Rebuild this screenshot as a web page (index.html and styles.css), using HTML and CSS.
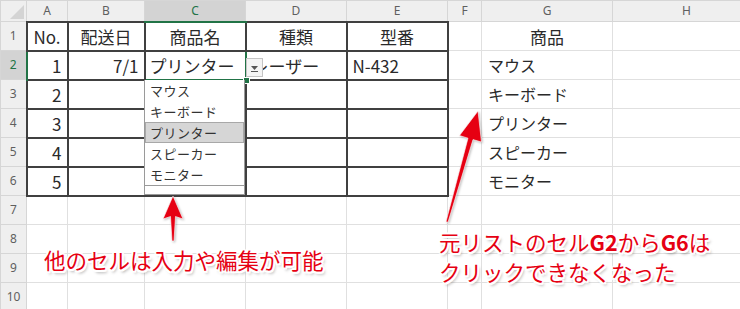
FILE: index.html
```html
<!DOCTYPE html>
<html lang="ja">
<head>
<meta charset="utf-8">
<link rel="stylesheet" href="styles.css">
</head>
<body>
<div class="sheet">
  <table class="grid">
    <colgroup>
      <col class="c-rh"><col class="c-a"><col class="c-b"><col class="c-c"><col class="c-d"><col class="c-e"><col class="c-f"><col class="c-g"><col class="c-h">
    </colgroup>
    <tr class="hdr">
      <th class="corner"><span class="tri"></span></th>
      <th>A</th><th>B</th><th class="sel-col">C</th><th>D</th><th>E</th><th>F</th><th>G</th><th>H</th>
    </tr>
    <tr>
      <th class="rh">1</th>
      <td class="tb tl tc">No.</td><td class="tb tc">配送日</td><td class="tb tc">商品名</td><td class="tb tc">種類</td><td class="tb tr tc">型番</td>
      <td></td><td class="tc">商品</td><td></td>
    </tr>
    <tr>
      <th class="rh sel-row">2</th>
      <td class="tb tl rt">1</td><td class="tb rt">7/1</td><td class="tb active">プリンター</td><td class="tb">レーザー</td><td class="tb tr">N-432</td>
      <td></td><td class="lst">マウス</td><td></td>
    </tr>
    <tr>
      <th class="rh">3</th>
      <td class="tb tl rt">2</td><td class="tb"></td><td class="tb"></td><td class="tb"></td><td class="tb tr"></td>
      <td></td><td class="lst">キーボード</td><td></td>
    </tr>
    <tr>
      <th class="rh">4</th>
      <td class="tb tl rt">3</td><td class="tb"></td><td class="tb"></td><td class="tb"></td><td class="tb tr"></td>
      <td></td><td class="lst">プリンター</td><td></td>
    </tr>
    <tr>
      <th class="rh">5</th>
      <td class="tb tl rt">4</td><td class="tb"></td><td class="tb"></td><td class="tb"></td><td class="tb tr"></td>
      <td></td><td class="lst">スピーカー</td><td></td>
    </tr>
    <tr>
      <th class="rh">6</th>
      <td class="tb tl bt rt">5</td><td class="tb bt"></td><td class="tb bt"></td><td class="tb bt"></td><td class="tb tr bt"></td>
      <td></td><td class="lst">モニター</td><td></td>
    </tr>
    <tr><th class="rh">7</th><td></td><td></td><td></td><td></td><td></td><td></td><td></td><td></td></tr>
    <tr><th class="rh">8</th><td></td><td></td><td></td><td></td><td></td><td></td><td></td><td></td></tr>
    <tr><th class="rh">9</th><td></td><td></td><td></td><td></td><td></td><td></td><td></td><td></td></tr>
    <tr><th class="rh">10</th><td></td><td></td><td></td><td></td><td></td><td></td><td></td><td></td></tr>
  </table>

  <span class="handle"></span>
  <div class="dd-btn"><svg width="9" height="8" viewBox="0 0 9 8"><path d="M1 2h7L4.5 6z" fill="#555"/><path d="M1 7.5h7" stroke="#555" stroke-width="1"/></svg></div>
  <ul class="dd-list">
    <li>マウス</li>
    <li>キーボード</li>
    <li class="hl">プリンター</li>
    <li>スピーカー</li>
    <li>モニター</li>
    <li class="blank"></li>
  </ul>

  <svg class="arrows" width="740" height="309" viewBox="0 0 740 309">
    <g fill="#e60012" stroke="#ffffff" stroke-width="0.6">
      <polygon points="173,196 183,219 175.5,216.5 174,241 172,241 170.5,216.5 163,219"/>
      <polygon points="478,111 481.5,142 473,139.6 448,222.3 446,221.7 468,138.2 459.5,135.5"/>
    </g>
  </svg>

  <p class="note note-left">他のセルは入力や編集が可能</p>
  <p class="note note-right">元リストのセル<b>G2</b>から<b>G6</b>は<br>クリックできなくなった</p>
</div>
</body>
</html>
```
FILE: styles.css
```css
html, body {
  margin: 0;
  padding: 0;
  background: #ffffff;
}

.sheet {
  position: relative;
  width: 740px;
  height: 309px;
  overflow: hidden;
  font-family: "Noto Sans CJK JP", "Noto Sans", sans-serif;
}

.grid {
  border-collapse: collapse;
  table-layout: fixed;
  width: 760px;
}

.c-rh { width: 26px; }
.c-a { width: 41px; }
.c-b { width: 77px; }
.c-c { width: 101px; }
.c-d { width: 101px; }
.c-e { width: 101px; }
.c-f { width: 34px; }
.c-g { width: 131px; }
.c-h { width: 148px; }

.grid tr { height: 29px; }
.grid tr.hdr { height: 21px; }

.grid th {
  background: #efefef;
  border: 1px solid #d6d6d6;
  color: #5f5f5f;
  font-weight: normal;
  font-size: 12px;
  font-family: "Noto Sans", "Noto Sans CJK JP", sans-serif;
  padding: 0;
  text-align: center;
  line-height: 1;
}

.grid th.corner {
  position: relative;
}

.tri {
  position: absolute;
  right: 2px;
  bottom: 2px;
  width: 0;
  height: 0;
  border-left: 14px solid transparent;
  border-bottom: 14px solid #d4d4d4;
}

.grid th.sel-col {
  background: #d3d3d3;
  color: #217346;
  border-bottom: 2px solid #217346;
}

.grid th.sel-row {
  background: #d3d3d3;
  color: #217346;
  border-right: 2px solid #217346;
}

.grid td {
  border: 1px solid #e0e0e0;
  font-size: 17px;
  color: #2a2a2a;
  padding: 0 5px;
  white-space: nowrap;
  overflow: hidden;
  line-height: 1;
}

.grid td.tb {
  border: 2px solid #404040;
}

.grid td.tc { text-align: center; }
.grid td.rt { text-align: right; }
.grid td.lst { font-size: 16px; padding-left: 6px; }

.grid td.active {
  border: 2px solid #217346;
  padding-left: 4px;
}

.handle {
  position: absolute;
  left: 243px;
  top: 77px;
  width: 5px;
  height: 5px;
  background: #217346;
  border: 1px solid #fff;
}

.dd-btn {
  position: absolute;
  left: 246px;
  top: 58px;
  width: 15px;
  height: 17px;
  background: #f4f4f4;
  border: 1px solid #c4c4c4;
  display: flex;
  align-items: center;
  justify-content: center;
}

.dd-list {
  position: absolute;
  left: 144px;
  top: 80px;
  width: 99px;
  margin: 0;
  padding: 0;
  list-style: none;
  background: #fff;
  border: 1px solid #9a9a9a;
  border-top: none;
}

.dd-list li {
  height: 21px;
  line-height: 21px;
  font-size: 13px;
  color: #333;
  padding-left: 5px;
  letter-spacing: 0.5px;
  box-sizing: border-box;
}

.dd-list li.hl {
  background: #d6d6d6;
  border: 1px solid #a8a8a8;
  line-height: 19px;
  padding-left: 4px;
}

.dd-list li.blank {
  height: 9px;
  border-top: 1px solid #9a9a9a;
}

.arrows {
  position: absolute;
  left: 0;
  top: 0;
  pointer-events: none;
  filter: drop-shadow(1px 1px 1px rgba(0,0,0,0.25));
}

.note {
  position: absolute;
  margin: 0;
  color: #e60012;
  font-size: 21.5px;
  line-height: 30px;
  white-space: nowrap;
  font-family: "Noto Sans CJK JP", sans-serif;
  text-shadow:
    -2px 0 0 #fff, 2px 0 0 #fff, 0 -2px 0 #fff, 0 2px 0 #fff,
    -1.5px -1.5px 0 #fff, 1.5px -1.5px 0 #fff, -1.5px 1.5px 0 #fff, 1.5px 1.5px 0 #fff,
    2px 3px 3px rgba(0,0,0,0.35);
}

.note b { font-weight: bold; }

.note-left {
  left: 44px;
  top: 245px;
}

.note-right {
  left: 439px;
  top: 227px;
}
```
